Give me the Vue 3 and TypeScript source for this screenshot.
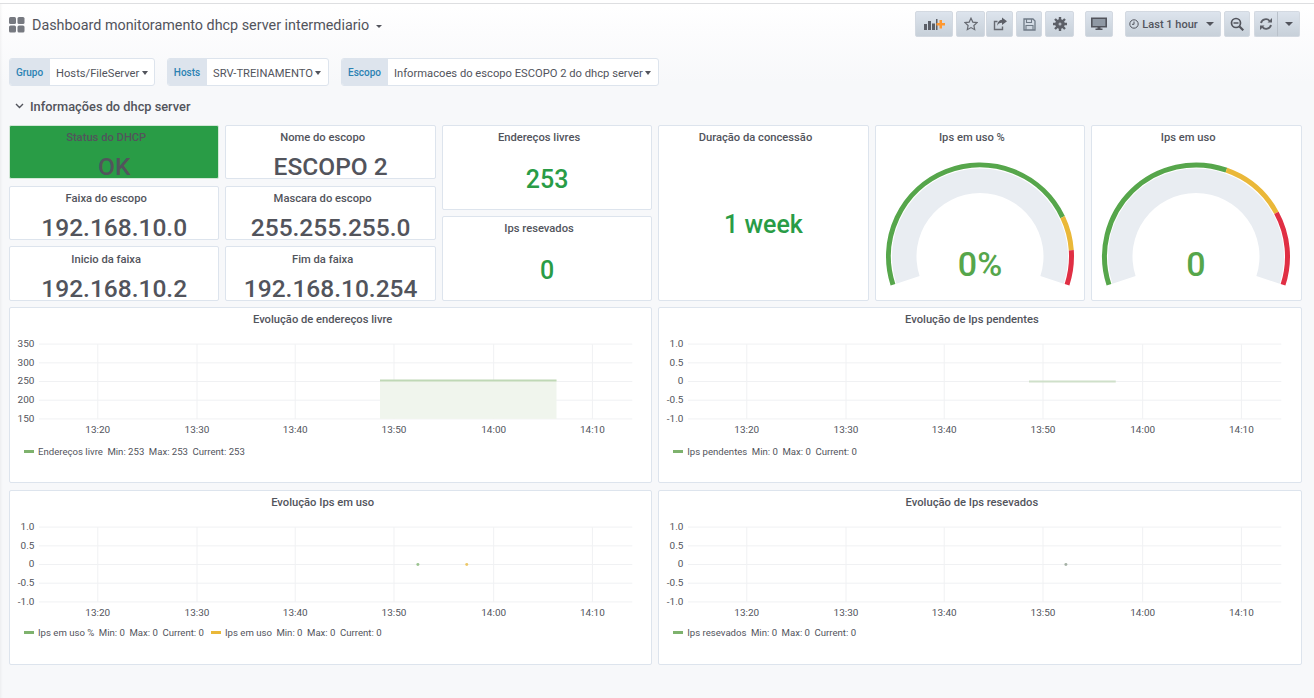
<script setup lang="ts">
interface Cell { title: string; value: string; cls?: string }
interface Arc { d: string; color: string }
interface Gauge { title: string; value: string; stops: number[] }
interface Legend { color: string; name: string; min: string; max: string; cur: string }
interface Graph {
  title: string
  yLabels: string[]
  legend: Legend[]
  area?: { x1: number; x2: number }
  line?: { x1: number; x2: number }
  dots?: { x: number; color: string }[]
}

const cells: Cell[] = [
  { title: 'Status do DHCP', value: 'OK', cls: 'ok' },
  { title: 'Nome do escopo', value: 'ESCOPO 2' },
  { title: 'Faixa do escopo', value: '192.168.10.0' },
  { title: 'Mascara do escopo', value: '255.255.255.0' },
  { title: 'Inicio da faixa', value: '192.168.10.2' },
  { title: 'Fim da faixa', value: '192.168.10.254' },
]

const vars = [
  { label: 'Grupo', value: 'Hosts/FileServer', lw: 41, w: 146 },
  { label: 'Hosts', value: 'SRV-TREINAMENTO', lw: 40, w: 162 },
  { label: 'Escopo', value: 'Informacoes do escopo ESCOPO 2 do dhcp server', lw: 47, w: 318 },
]

function polar(r: number, deg: number): [number, number] {
  const a = (deg * Math.PI) / 180
  return [105 + r * Math.cos(a), 131.5 - r * Math.sin(a)]
}
function arc(r: number, from: number, to: number): string {
  const [x1, y1] = polar(r, from)
  const [x2, y2] = polar(r, to)
  const large = from - to > 180 ? 1 : 0
  return `M${x1.toFixed(2)} ${y1.toFixed(2)}A${r} ${r} 0 ${large} 1 ${x2.toFixed(2)} ${y2.toFixed(2)}`
}
const bandPath = (() => {
  const [ax, ay] = polar(88, 198)
  const [bx, by] = polar(88, -18)
  const [cx, cy] = polar(63.5, -18)
  const [dx, dy] = polar(63.5, 198)
  return `M${ax} ${ay}A88 88 0 1 1 ${bx} ${by}L${cx} ${cy}A63.5 63.5 0 1 0 ${dx} ${dy}Z`
})()
const gauges: (Gauge & { arcs: Arc[] })[] = [
  { title: 'Ips em uso %', value: '0%', stops: [198, 25.5, 3.9, -18] },
  { title: 'Ips em uso', value: '0', stops: [198, 70.6, 28.5, -18] },
].map((g) => ({
  ...g,
  arcs: [
    { d: arc(91.5, g.stops[0], g.stops[1]), color: '#56a64b' },
    { d: arc(91.5, g.stops[1], g.stops[2]), color: '#eab839' },
    { d: arc(91.5, g.stops[2], g.stops[3]), color: '#e02f44' },
  ],
}))

const ticks = [
  { x: 88, t: '13:20' },
  { x: 187.5, t: '13:30' },
  { x: 286, t: '13:40' },
  { x: 385, t: '13:50' },
  { x: 485, t: '14:00' },
  { x: 584, t: '14:10' },
]
const gridY = [0, 18.75, 37.5, 56.25, 75]
const unit = ['1.0', '0.5', '0', '-0.5', '-1.0']
const green = '#7eb26d'
const yellow = '#eab839'

const graphs: Graph[] = [
  {
    title: 'Evolução de endereços livre',
    yLabels: ['350', '300', '250', '200', '150'],
    legend: [{ color: green, name: 'Endereços livre', min: '253', max: '253', cur: '253' }],
    area: { x1: 371, x2: 548 },
  },
  {
    title: 'Evolução de Ips pendentes',
    yLabels: unit,
    legend: [{ color: green, name: 'Ips pendentes', min: '0', max: '0', cur: '0' }],
    line: { x1: 371, x2: 458 },
  },
  {
    title: 'Evolução Ips em uso',
    yLabels: unit,
    legend: [
      { color: green, name: 'Ips em uso %', min: '0', max: '0', cur: '0' },
      { color: yellow, name: 'Ips em uso', min: '0', max: '0', cur: '0' },
    ],
    dots: [
      { x: 409, color: green },
      { x: 458, color: yellow },
    ],
  },
  {
    title: 'Evolução de Ips resevados',
    yLabels: unit,
    legend: [{ color: green, name: 'Ips resevados', min: '0', max: '0', cur: '0' }],
    dots: [{ x: 408, color: '#8a9a8a' }],
  },
]
</script>

<template>
  <div class="page">
    <header class="nav">
      <div class="brand">
        <svg class="logo" width="16" height="16" viewBox="0 0 16 16">
          <rect x="0" y="0" width="7" height="7" rx="1.5" />
          <rect x="8.5" y="0" width="7" height="7" rx="1.5" />
          <rect x="0" y="8.5" width="7" height="7" rx="1.5" />
          <rect x="8.5" y="8.5" width="7" height="7" rx="1.5" />
        </svg>
        <span class="dash-title">Dashboard monitoramento dhcp server intermediario</span>
        <span class="caret small"></span>
      </div>
      <div class="tools">
        <button class="btn w38" aria-label="Add panel">
          <svg width="21" height="14" viewBox="0 0 21 14">
            <path fill="#5c5f67" d="M0 7h3v6H0zM4 4h3v9H4zM8 6.500h3V13H8zM12 2h1.500v11H12z" />
            <path fill="#ff9830" d="M15.500 3h2.500v3h3v2.500h-3v3h-2.500v-3h-3V6h3z" />
          </svg>
        </button>
        <button class="btn w29 g3" aria-label="Star">
          <svg width="14" height="14" viewBox="0 0 14 14">
            <path fill="none" stroke="#666971" stroke-width="1.200" d="M7 1.200l1.800 3.900 4.200.5-3.100 2.900.8 4.200L7 10.600l-3.700 2.100.8-4.200L1 5.600l4.200-.5z" />
          </svg>
        </button>
        <button class="btn w27 g1" aria-label="Share">
          <svg width="14" height="14" viewBox="0 0 14 14">
            <path fill="none" stroke="#666971" stroke-width="1.400" d="M9.500 9.500v3H1.500V4.500h3" />
            <path fill="#5c5f67" d="M9 0.500l5 3.800-5 3.700V5.800C6.500 5.800 5 7 4.200 8.800 4.300 5.500 6 3 9 2.700z" />
          </svg>
        </button>
        <button class="btn w26 g3" aria-label="Save">
          <svg width="13" height="13" viewBox="0 0 13 13">
            <path fill="none" stroke="#6f7a86" stroke-width="1.300" d="M1 1h9l2 2v9H1z" />
            <path fill="none" stroke="#6f7a86" stroke-width="1.100" d="M3.500 1v3.500h5V1M3 12V7.500h7V12" />
          </svg>
        </button>
        <button class="btn w29 g3" aria-label="Settings">
          <svg width="14" height="14" viewBox="0 0 14 14">
            <circle cx="7" cy="7" r="4.800" fill="#5c5f67" />
            <g stroke="#5c5f67" stroke-width="2.400">
              <path d="M7 0v14M0 7h14M2 2l10 10M12 2L2 12" />
            </g>
            <circle cx="7" cy="7" r="1.500" fill="#b4bac3" />
          </svg>
        </button>
        <button class="btn w28 g11" aria-label="Cycle view">
          <svg width="16" height="14" viewBox="0 0 16 14">
            <path fill="#8f98a3" stroke="#52545c" stroke-width="1.600" d="M0.800 1.300h14.400v8.400H0.800z" />
            <path fill="#52545c" d="M6.500 10h3v1.500h2V13h-7v-1.500h2z" />
          </svg>
        </button>
        <button class="btn time g12">
          <svg width="10" height="10" viewBox="0 0 10 10">
            <circle cx="5" cy="5" r="4.200" fill="none" stroke="#52545c" stroke-width="1" />
            <path d="M5 2.500V5.300H3" fill="none" stroke="#52545c" stroke-width="1" />
          </svg>
          <span>Last 1 hour</span>
          <span class="caret"></span>
        </button>
        <button class="btn w26 g3" aria-label="Zoom out">
          <svg width="14" height="14" viewBox="0 0 14 14">
            <circle cx="6" cy="6" r="4.500" fill="none" stroke="#52545c" stroke-width="1.700" />
            <path d="M9.500 9.500l3.800 3.800" stroke="#52545c" stroke-width="2.200" />
            <path d="M3.500 6h5" stroke="#52545c" stroke-width="1.500" />
          </svg>
        </button>
        <div class="split g4">
          <button class="btn w24 joined-l" aria-label="Refresh">
            <svg width="14" height="14" viewBox="0 0 14 14">
              <path fill="none" stroke="#5c5f67" stroke-width="1.900" d="M2 6a5 5 0 0 1 8.700-2M12 8a5 5 0 0 1-8.700 2" />
              <path fill="#5c5f67" d="M13 1v4.500H8.500zM1 13V8.500h4.500z" />
            </svg>
          </button>
          <button class="btn w22 joined-r" aria-label="Refresh interval"><span class="caret"></span></button>
        </div>
      </div>
    </header>

    <div class="vars">
      <div v-for="v in vars" :key="v.label" class="var" :style="{ width: v.w + 'px' }">
        <label :style="{ width: v.lw + 'px' }">{{ v.label }}</label>
        <div class="var-value">
          <span>{{ v.value }}</span>
          <span class="caret dark"></span>
        </div>
      </div>
    </div>

    <div class="row-title">
      <svg width="9" height="6" viewBox="0 0 9 6"><path d="M1 1l3.500 3.500L8 1" fill="none" stroke="#52545c" stroke-width="1.400" /></svg>
      <span>Informações do dhcp server</span>
    </div>

    <main class="board">
      <div class="top">
        <div class="cells">
          <section v-for="c in cells" :key="c.title" class="panel cell" :class="c.cls">
            <h3>{{ c.title }}</h3>
            <div class="big">{{ c.value }}</div>
          </section>
        </div>
        <div class="stack">
          <section class="panel stat">
            <h3>Endereços livres</h3>
            <div class="green-value">253</div>
          </section>
          <section class="panel stat">
            <h3>Ips resevados</h3>
            <div class="green-value">0</div>
          </section>
        </div>
        <section class="panel stat">
          <h3>Duração da concessão</h3>
          <div class="green-value">1 week</div>
        </section>
        <section v-for="g in gauges" :key="g.title" class="panel gauge">
          <h3>{{ g.title }}</h3>
          <svg class="gauge-svg" width="211" height="176" viewBox="0 0 211 176">
            <path :d="bandPath" fill="#e9edf2" />
            <path v-for="a in g.arcs" :key="a.color" :d="a.d" fill="none" :stroke="a.color" stroke-width="5" />
            <text x="105" y="151" text-anchor="middle" class="gauge-text">{{ g.value }}</text>
          </svg>
        </section>
      </div>

      <div class="graphs">
        <section v-for="g in graphs" :key="g.title" class="panel graph">
          <h3>{{ g.title }}</h3>
          <svg class="plot" width="100%" height="106" viewBox="0 0 643 106">
            <g transform="translate(0 9)">
              <line v-for="y in gridY" :key="y" x1="29" x2="624" :y1="y" :y2="y" class="gridline" />
              <line v-for="t in ticks" :key="t.x" :x1="t.x" :x2="t.x" y1="0" y2="75" class="gridline" />
              <text v-for="(l, i) in g.yLabels" :key="l" x="24.500" :y="gridY[i] + 3" text-anchor="end" class="axis">{{ l }}</text>
              <text v-for="t in ticks" :key="t.t" :x="t.x" y="89" text-anchor="middle" class="axis">{{ t.t }}</text>
              <template v-if="g.area">
                <rect :x="g.area.x1" y="36" :width="g.area.x2 - g.area.x1" height="39" fill="#f0f5ed" />
                <line :x1="g.area.x1" :x2="g.area.x2" y1="36.500" y2="36.500" stroke="#bfd8b6" stroke-width="2" />
              </template>
              <line v-if="g.line" :x1="g.line.x1" :x2="g.line.x2" y1="37.500" y2="37.500" stroke="#cfe0ca" stroke-width="2" />
              <circle v-for="d in g.dots" :key="d.x" :cx="d.x" cy="37.500" r="1.500" :fill="d.color" opacity="0.750" />
            </g>
          </svg>
          <div class="legend">
            <div v-for="l in g.legend" :key="l.name" class="legend-item">
              <i :style="{ background: l.color }"></i>
              <span>{{ l.name }}</span>
              <span>Min: {{ l.min }}</span>
              <span>Max: {{ l.max }}</span>
              <span>Current: {{ l.cur }}</span>
            </div>
          </div>
        </section>
      </div>
    </main>
  </div>
</template>

<style>
html, body { margin: 0; background: #f7f8fa; }
</style>

<style scoped>
.page {
  position: relative;
  width: 1314px;
  height: 698px;
  overflow: hidden;
  box-sizing: border-box;
  font-family: Roboto, "Noto Sans", sans-serif;
  color: #52545c;
  background: linear-gradient(to bottom, #ffffff 0, #ffffff 4px, #fcfcfd 30px, #f7f8fa 80px);
  border-top: 3px solid #fff;
  box-shadow: inset 3px 0 3px -2px rgba(0, 0, 0, 0.05);
}
.nav {
  display: flex;
  justify-content: space-between;
  border-top: 1px solid #dedfe1;
  height: 55px;
  box-sizing: border-box;
  padding: 7px 14px 0 9px;
}
.brand { display: flex; align-items: center; height: 28px; }
.logo { fill: #767980; margin-right: 7px; }
.dash-title { font-size: 14.350px; color: #52545c; }
.caret {
  display: inline-block;
  width: 0;
  height: 0;
  border-left: 4px solid transparent;
  border-right: 4px solid transparent;
  border-top: 4px solid #52545c;
}
.caret.small {
  margin-left: 7px;
  margin-top: 3px;
  border-left-width: 3px;
  border-right-width: 3px;
  border-top-width: 3px;
}
.caret.dark { border-left-width: 3.500px; border-right-width: 3.500px; }
.tools { display: flex; height: 26px; }
.btn {
  display: flex;
  align-items: center;
  justify-content: center;
  box-sizing: border-box;
  height: 26px;
  padding: 0;
  border: 1px solid #d3d9e1;
  border-radius: 2px;
  background: linear-gradient(to bottom, #dde4ed, #c7d0d9);
  color: #52545c;
  font-family: inherit;
  font-size: 11px;
  font-weight: 500;
}
.w38 { width: 38px; }
.w29 { width: 29px; }
.w28 { width: 28px; }
.w27 { width: 27px; }
.w26 { width: 26px; }
.w24 { width: 24px; }
.w22 { width: 22px; }
.g1 { margin-left: 1px; }
.g3 { margin-left: 3px; }
.g4 { margin-left: 4px; }
.g11 { margin-left: 11px; }
.g12 { margin-left: 12px; }
.time { width: 96px; gap: 3px; padding-right: 3px; }
.time .caret { margin-left: 5px; }
.split { display: flex; }
.joined-l { border-radius: 2px 0 0 2px; border-right: 1px solid #b9c1ca; }
.joined-r { border-radius: 0 2px 2px 0; border-left: 0; }

.vars { display: flex; gap: 12px; padding-left: 9px; }
.var {
  display: flex;
  height: 28px;
  box-sizing: border-box;
  border: 1px solid #dde4ed;
  border-radius: 3px;
  background: #fff;
  overflow: hidden;
}
.var label {
  display: flex;
  align-items: center;
  justify-content: center;
  flex: none;
  margin: -1px 0 -1px -1px;
  background: #dde4ed;
  color: #2b82b3;
  font-size: 10px;
  font-weight: 500;
}
.var-value {
  flex: 1;
  display: flex;
  align-items: center;
  gap: 2.500px;
  padding: 2px 5px 0 6px;
  font-size: 11.200px;
  white-space: nowrap;
}
.row-title {
  display: flex;
  align-items: center;
  gap: 6px;
  height: 18px;
  margin-top: 11px;
  padding-left: 15px;
  font-size: 12.800px;
  font-weight: 500;
}
.board { padding: 10px 12.500px 0 9px; }
.top {
  display: grid;
  grid-template-columns: repeat(6, 1fr);
  gap: 6px;
  height: 176px;
}
.cells {
  grid-column: span 2;
  display: grid;
  grid-template-columns: 1fr 1fr;
  grid-template-rows: 54px 54px 55px;
  gap: 6.500px 6px;
}
.stack { display: grid; grid-template-rows: 85px 85px; gap: 6px; }
.panel {
  box-sizing: border-box;
  background: #fff;
  border: 1px solid #dde4ed;
  border-radius: 2px;
  overflow: hidden;
  text-align: center;
}
h3 {
  margin: 0;
  padding: 4px 16px 0 0;
  font-size: 11.200px;
  line-height: 15px;
  font-weight: 500;
  color: #52545c;
}
.cell { display: flex; flex-direction: column; overflow: visible; }
.big { font-size: 24.500px; font-weight: 500; line-height: 22px; margin-top: 11px; white-space: nowrap; }
.cell:nth-child(n + 5) h3 { padding-top: 5px; }
.ok { background: #299c46; border-color: #d2e7d7; }
.stat { display: flex; flex-direction: column; }
.green-value {
  flex: 1;
  display: flex;
  align-items: center;
  justify-content: center;
  padding-top: 4px;
  font-size: 25px;
  font-weight: 500;
  color: #299c46;
}
.gauge { position: relative; }
.gauge-svg { position: absolute; left: -1px; top: -1px; }
.gauge-text { font-family: Roboto, sans-serif; font-size: 34px; font-weight: 500; fill: #56a64b; }
.graphs {
  display: grid;
  grid-template-columns: 1fr 1fr;
  grid-template-rows: 175.500px 175.500px;
  gap: 7px 6px;
  margin-top: 6px;
}
.graph { display: flex; flex-direction: column; }
.plot { display: block; margin-top: 8px; flex: none; }
.gridline { stroke: #f0f1f3; stroke-width: 1; }
.axis { font-family: Roboto, sans-serif; font-size: 10px; fill: #52545c; }
.legend { display: flex; gap: 7px; padding: 5px 0 0 14px; font-size: 9.600px; }
.graph:nth-child(n + 3) .legend { padding-top: 3px; }
.legend-item { display: flex; align-items: center; gap: 4.500px; }
.legend-item i { display: block; width: 10px; height: 3px; margin-right: -0.500px; }
</style>
